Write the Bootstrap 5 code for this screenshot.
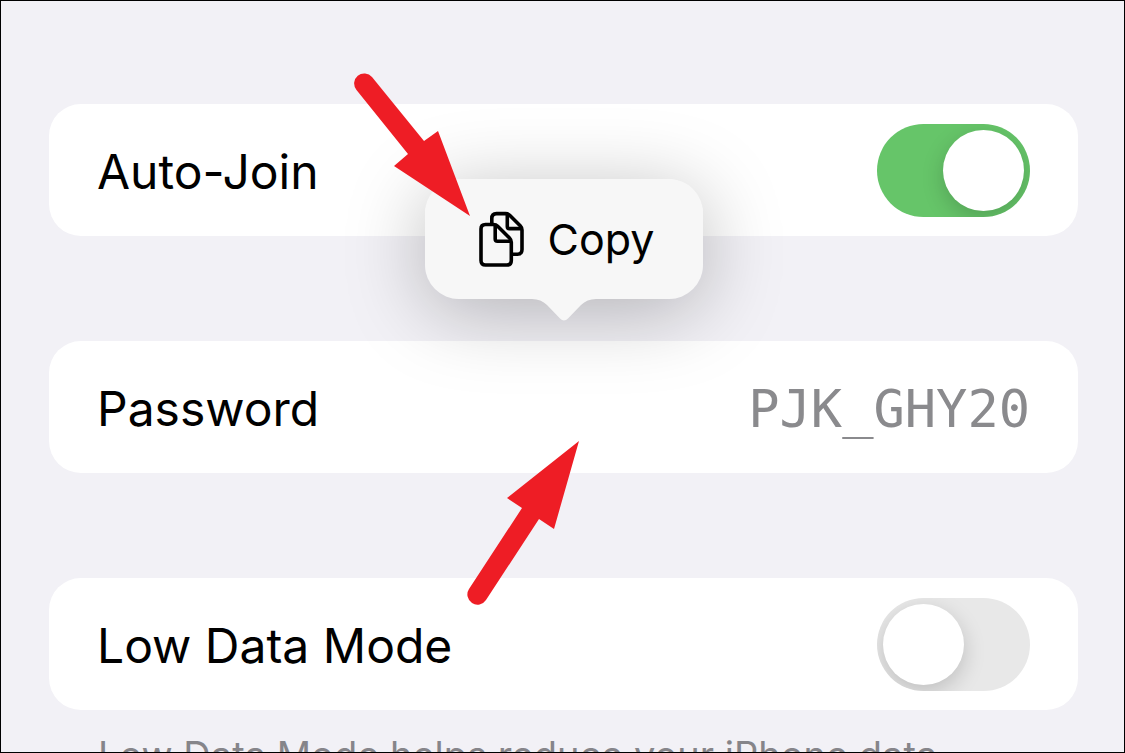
<!DOCTYPE html>
<html lang="en">
<head>
<meta charset="utf-8">
<meta name="viewport" content="width=device-width, initial-scale=1">
<title>Wi-Fi network</title>
<link href="https://cdn.jsdelivr.net/npm/bootstrap@5.3.0/dist/css/bootstrap.min.css" rel="stylesheet">
<style>
  body { font-family: Inter, "Liberation Sans", sans-serif; color: #000; background: #f2f1f6; }
  .screen { border: 1px solid #000; padding: 103px 46px 0 48px; }
  .settings { gap: 105px; }
  .setting { min-height: 132px; padding: 0 48px; border-radius: 32px; background: #fff; font-size: 48px; line-height: 60px; }
  .setting-text { padding-top: 4px; }
  .setting-value { font-family: "DejaVu Sans Mono", monospace; font-size: 52px; color: #8a8a8d; }
  .setting-group { display: grid; gap: 21px; }
  .hint { font-size: 38px; line-height: 48px; color: #86858a; margin: 0; padding: 0 49px; }

  .form-check-input.toggle { width: 153px; height: 93px; margin: 0; padding: 6px; border: 0; border-radius: 47px; background: #e8e8e8; overflow: hidden; display: flex; }
  .form-check-input.toggle:checked { background: #66c569; justify-content: flex-end; }
  .toggle::before { content: ""; width: 81px; height: 81px; border-radius: 50%; background: #fff; box-shadow: 0 7px 22px rgba(0,0,0,.18); }

  .bubble { left: 50%; bottom: 100%; margin-bottom: 42px; width: 278px; height: 120px; transform: translateX(-50%); z-index: 2; }
  .bubble-shadow { inset: 0; border-radius: 36px; box-shadow: 0 12px 80px rgba(0,0,0,.27); }
  .bubble-btn { width: 100%; height: 100%; gap: 23px; padding: 0 0 0 5px; border: 0; border-radius: 34px; background: #f7f7f7; color: #000; font-size: 43px; line-height: 52px; }
  .bubble-tail { top: 100%; left: 50%; transform: translateX(-50%); margin-top: -1px; }
  .pointer-copy { left: -71px; top: -106px; }
  .pointer-row { left: calc(50% - 97px); top: 100px; z-index: 2; }
</style>
</head>
<body>
<main class="screen vh-100 overflow-hidden">
  <div class="settings d-flex flex-column">
    <div class="setting d-flex align-items-center justify-content-between">
      <label class="setting-text" for="autoJoin">Auto-Join</label>
      <input class="form-check-input toggle" type="checkbox" role="switch" id="autoJoin" checked>
    </div>

    <div class="setting position-relative d-flex align-items-center justify-content-between">
      <span class="setting-text">Password</span>
      <span class="setting-text setting-value">PJK_GHY20</span>

      <div class="bubble position-absolute">
        <div class="bubble-shadow position-absolute"></div>
        <button type="button" class="bubble-btn position-relative d-flex align-items-center justify-content-center">
          <svg width="47" height="57" viewBox="0 0 47 57" fill="none" stroke="#000" stroke-width="3.6" stroke-linejoin="round" aria-hidden="true">
            <path d="M13.8 13V7.500Q13.800 2.600 18.500 2.600H27.500Q30 2.600 31.700 4.300L42.200 14.800Q44 16.600 44 19V38.500Q44 43.200 39.500 43.200H34"/>
            <path d="M29.300 3V15.500Q29.300 17.600 31.400 17.600H43.500"/>
            <path d="M7.500 13.500H15.500Q18 13.500 19.700 15.200L31.500 27Q33.300 28.800 33.300 31.300V49.500Q33.300 54 28.800 54H7.500Q3 54 3 49.500V18Q3 13.500 7.500 13.500Z"/>
            <path d="M17.200 14V28Q17.200 30.300 19.500 30.300H33"/>
          </svg>
          <span>Copy</span>
        </button>
        <svg class="bubble-tail position-absolute" width="64" height="23" viewBox="0 0 64 23" aria-hidden="true">
          <path fill="#f7f7f7" d="M0 0V1Q9 1 15 7L28 20.500Q32 24.500 36 20.500L49 7Q55 1 64 1V0Z"/>
        </svg>
        <svg class="pointer-copy position-absolute" width="116" height="143" viewBox="0 0 116 143" aria-hidden="true">
          <path fill="#ee1d25" d="M18 4L70 68L84 58L116 143L40 93L54 81L2.500 17A10 10 0 0 1 18 4Z"/>
        </svg>
      </div>

      <svg class="pointer-row position-absolute" width="112" height="164" viewBox="0 0 112 164" aria-hidden="true">
        <path fill="#ee1d25" d="M2 148L55 67L40 57L112 0L87 88L72 78L19 159A10 10 0 0 1 2 148Z"/>
      </svg>
    </div>

    <div class="setting-group">
      <div class="setting d-flex align-items-center justify-content-between">
        <label class="setting-text" for="lowData">Low Data Mode</label>
        <input class="form-check-input toggle" type="checkbox" role="switch" id="lowData">
      </div>
      <p class="hint text-nowrap">Low Data Mode helps reduce your iPhone data</p>
    </div>
  </div>
</main>
<script src="https://cdn.jsdelivr.net/npm/bootstrap@5.3.0/dist/js/bootstrap.bundle.min.js"></script>
</body>
</html>
